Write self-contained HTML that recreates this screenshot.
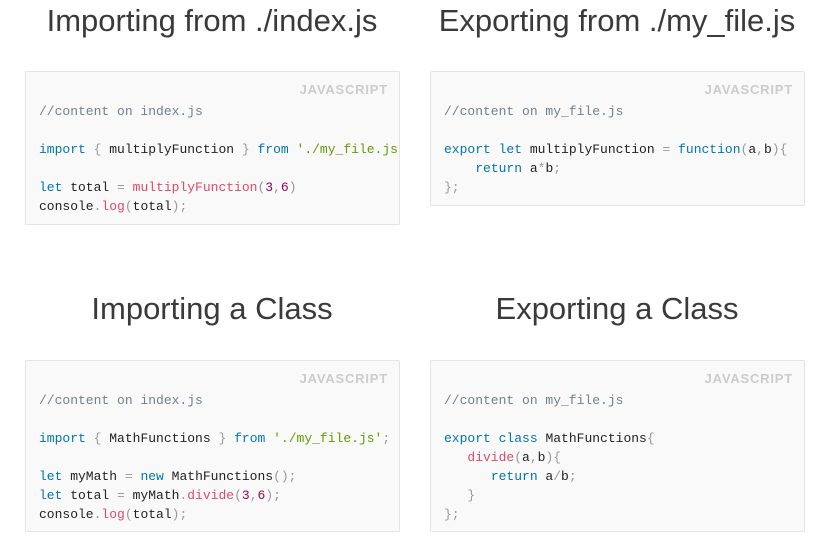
<!DOCTYPE html>
<html><head><style>
body{margin:0;width:817px;height:557px;background:#fff;position:relative;overflow:hidden;font-family:"Liberation Sans",sans-serif}
h2{position:absolute;margin:0;font-weight:normal;font-size:31px;color:#3a3a3a;text-align:center;width:410px;line-height:40px}
.box{position:absolute;width:373px;background:#f9f9f9;border:1px solid #e4e4e4;border-radius:2px;overflow:hidden}
.lab{position:absolute;right:11px;top:10px;font:bold 13px "Liberation Sans",sans-serif;color:#ccc;letter-spacing:0.8px}
pre{position:absolute;left:13px;top:30px;margin:0;font:13px/19px "Liberation Mono",monospace;color:#222;white-space:pre}
.c{color:#708090}.k{color:#07a}.p{color:#999}.f{color:#dd4a68}.s{color:#690}.n{color:#905}
</style></head><body>
<h2 style="left:7px;top:1px">Importing from ./index.js</h2>
<h2 style="left:412px;top:1px">Exporting from ./my_file.js</h2>
<h2 style="left:7px;top:289px">Importing a Class</h2>
<h2 style="left:412px;top:289px">Exporting a Class</h2>

<div class="box" style="left:25px;top:71px;height:152px"><div class="lab">JAVASCRIPT</div><pre><span class="c">//content on index.js</span>

<span class="k">import</span> <span class="p">{</span> multiplyFunction <span class="p">}</span> <span class="k">from</span> <span class="s">'./my_file.js'</span><span class="p">;</span>

<span class="k">let</span> total <span class="p">=</span> <span class="f">multiplyFunction</span><span class="p">(</span><span class="n">3</span><span class="p">,</span><span class="n">6</span><span class="p">)</span>
console<span class="p">.</span><span class="f">log</span><span class="p">(</span>total<span class="p">);</span></pre></div>

<div class="box" style="left:430px;top:71px;height:133px"><div class="lab">JAVASCRIPT</div><pre><span class="c">//content on my_file.js</span>

<span class="k">export</span> <span class="k">let</span> multiplyFunction <span class="p">=</span> <span class="k">function</span><span class="p">(</span>a<span class="p">,</span>b<span class="p">){</span>
    <span class="k">return</span> a<span class="p">*</span>b<span class="p">;</span>
<span class="p">};</span></pre></div>

<div class="box" style="left:25px;top:360px;height:170px"><div class="lab">JAVASCRIPT</div><pre><span class="c">//content on index.js</span>

<span class="k">import</span> <span class="p">{</span> MathFunctions <span class="p">}</span> <span class="k">from</span> <span class="s">'./my_file.js'</span><span class="p">;</span>

<span class="k">let</span> myMath <span class="p">=</span> <span class="k">new</span> MathFunctions<span class="p">();</span>
<span class="k">let</span> total <span class="p">=</span> myMath<span class="p">.</span><span class="f">divide</span><span class="p">(</span><span class="n">3</span><span class="p">,</span><span class="n">6</span><span class="p">);</span>
console<span class="p">.</span><span class="f">log</span><span class="p">(</span>total<span class="p">);</span></pre></div>

<div class="box" style="left:430px;top:360px;height:170px"><div class="lab">JAVASCRIPT</div><pre><span class="c">//content on my_file.js</span>

<span class="k">export</span> <span class="k">class</span> MathFunctions<span class="p">{</span>
   <span class="f">divide</span><span class="p">(</span>a<span class="p">,</span>b<span class="p">){</span>
      <span class="k">return</span> a<span class="p">/</span>b<span class="p">;</span>
   <span class="p">}</span>
<span class="p">};</span></pre></div>
</body></html>
